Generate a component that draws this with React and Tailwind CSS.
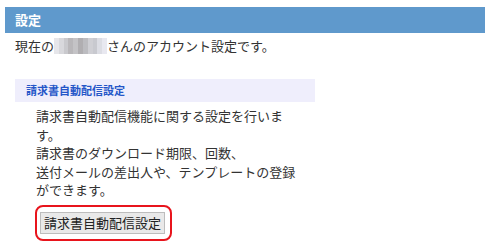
import React from "react";

const font = { fontFamily: '"Noto Sans CJK JP", "Liberation Sans", sans-serif' };

// pixelated name (blurred in the screenshot)
const blurCells = [
  "#e6e6ea", "#d8d8dc", "#c9c9cd", "#b9b7ba", "#c4c3c6", "#b0aeb1", "#bcbcc0", "#cfcfd4", "#c8c9cf", "#dcdde4", "#e8e8f0",
];

const BlurredName = () => (
  <span className="inline-flex h-[16px] w-[53px] align-[-3px]">
    {blurCells.map((c, i) => (
      <span key={i} className="flex-1" style={{ backgroundColor: c }} />
    ))}
  </span>
);

export default function App() {
  return (
    <div className="bg-white w-[485px] h-[252px] overflow-hidden pt-[7px] pl-[5px] text-[#333]" style={font}>
      <div className="h-[26px] bg-[#5f99cc] flex items-center pl-[10px]">
        <span className="text-white font-bold text-[13px]">設定</span>
      </div>
      <p className="mt-[4px] pl-[10px] text-[13px] leading-[18px]">
        現在の<BlurredName />さんのアカウント設定です。
      </p>
      <div className="ml-[10px] mt-[24px] w-[300px] h-[23px] bg-[#efeefc] flex items-center pl-[11px]">
        <span className="text-[#2456c8] font-bold text-[11px]">請求書自動配信設定</span>
      </div>
      <p className="ml-[31px] mt-[5px] w-[266px] text-[13px] leading-[18.5px]">
        請求書自動配信機能に関する設定を行います。
        <br />
        請求書のダウンロード期限、回数、
        <br />
        送付メールの差出人や、テンプレートの登録ができます。
      </p>
      <div className="ml-[30px] mt-[5px] w-[137px] h-[36px] border-2 border-[#e8141c] rounded-[8px] flex items-center pl-[3px]">
        <button className="h-[22px] w-[125px] bg-[#e9e9e9] border border-[#bdbdbd] text-[13px] text-[#222] flex items-center justify-center leading-none" style={font}>
          請求書自動配信設定
        </button>
      </div>
    </div>
  );
}
